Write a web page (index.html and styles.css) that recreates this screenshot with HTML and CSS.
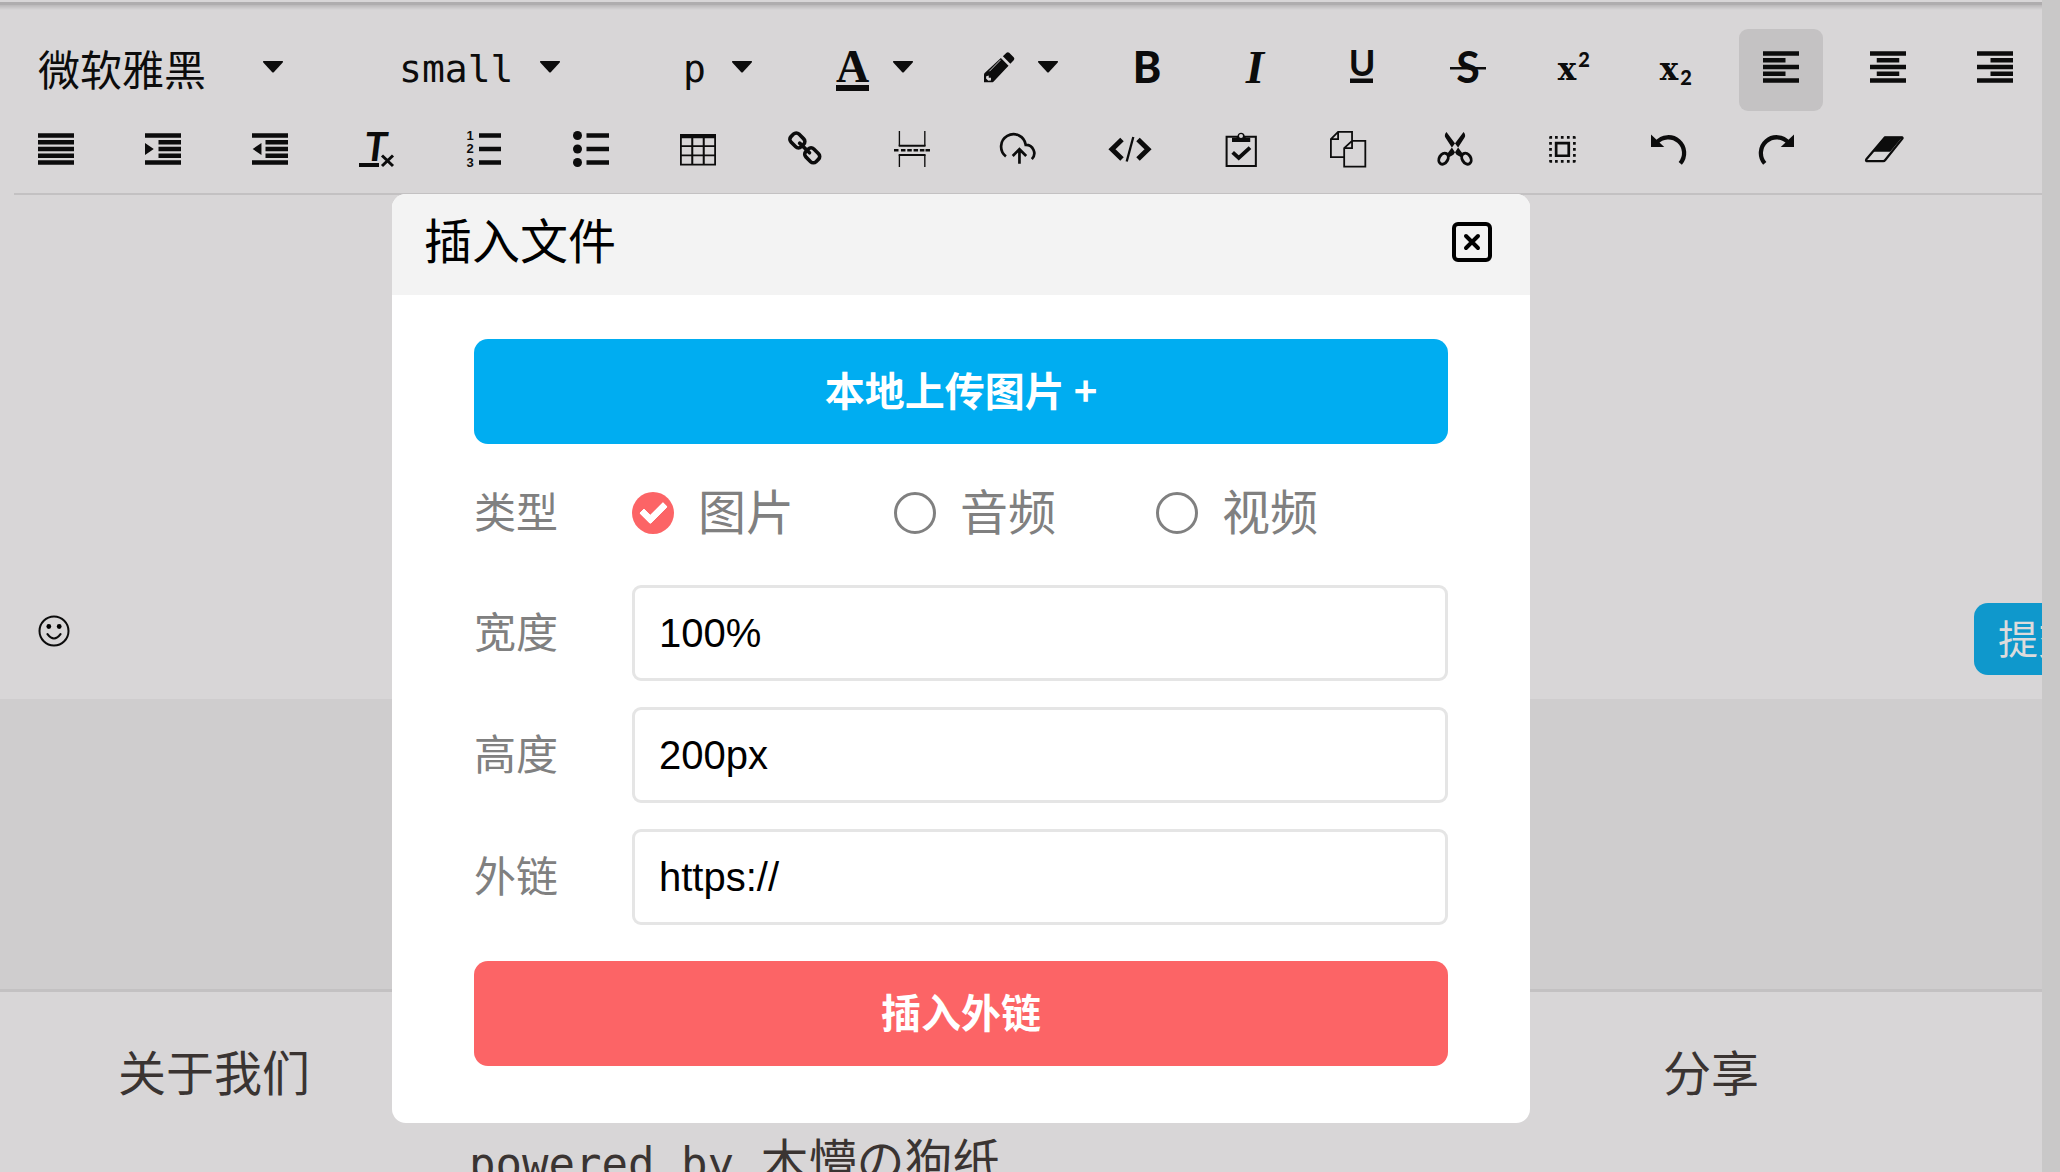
FILE: index.html
```html
<!DOCTYPE html>
<html lang="zh-CN">
<head>
<meta charset="utf-8">
<title>插入文件</title>
<link rel="stylesheet" href="styles.css">
</head>
<body>
<div class="page">
  <div class="topline"></div>
  <main class="editor">
    <div class="toolbar" role="toolbar" aria-label="编辑器工具栏">
      <label class="tool picker">
        <select class="picker-select picker-font" aria-label="字体"><option>微软雅黑</option></select>
        <svg class="caret" viewBox="0 0 20 12"><path d="M1 0h18q2 0 .5 1.8L11 11q-1 1-2 0L.5 1.8Q-1 0 1 0z"/></svg>
      </label>
      <label class="tool picker picker-size">
        <select class="picker-select mono" aria-label="字号"><option>small</option></select>
        <svg class="caret" viewBox="0 0 20 12"><path d="M1 0h18q2 0 .5 1.8L11 11q-1 1-2 0L.5 1.8Q-1 0 1 0z"/></svg>
      </label>
      <label class="tool picker picker-block">
        <select class="picker-select mono" aria-label="段落"><option>p</option></select>
        <svg class="caret" viewBox="0 0 20 12"><path d="M1 0h18q2 0 .5 1.8L11 11q-1 1-2 0L.5 1.8Q-1 0 1 0z"/></svg>
      </label>
      <button class="tool" aria-label="文字颜色">
        <svg class="icon icon-color" viewBox="0 0 33 36"><text class="serif" x="16.5" y="33" font-size="46">A</text><path d="M0 36h33v6H0z"/></svg>
        <svg class="caret" viewBox="0 0 20 12"><path d="M1 0h18q2 0 .5 1.8L11 11q-1 1-2 0L.5 1.8Q-1 0 1 0z"/></svg>
      </button>
      <button class="tool" aria-label="背景颜色">
        <svg class="icon icon-pencil" viewBox="0 0 13.33 16"><path fill-rule="evenodd" d="M10 1.7q.6-.6 1.2 0l2 2q.6.7 0 1.300L11.700 6.600 8.400 3.200zM7.500 4l3.400 3.400L4.200 14.500q-.3.3-.7.3H0v-3.400q0-.4.300-.7zM1 12.100l-.1 1 1 1 1.200-.1v-1.200H2.100v-1z"/><path class="cut" d="M2.400 9.900l5-5.100"/></svg>
        <svg class="caret" viewBox="0 0 20 12"><path d="M1 0h18q2 0 .5 1.800L11 11q-1 1-2 0L.5 1.800Q-1 0 1 0z"/></svg>
      </button>
      <button class="tool" aria-label="加粗"><svg class="icon" viewBox="0 0 36 36"><text class="lato heavy" x="18" y="34" font-size="43">B</text></svg></button>
      <button class="tool" aria-label="斜体"><svg class="icon" viewBox="0 0 36 36"><text class="serif italic" x="19" y="34" font-size="47">I</text></svg></button>
      <button class="tool" aria-label="下划线"><svg class="icon" viewBox="0 0 36 36"><text class="lato" x="19" y="27" font-size="36">U</text><path d="M7 29.500h23V34H7z"/></svg></button>
      <button class="tool" aria-label="删除线"><svg class="icon" viewBox="0 0 36 36"><text class="lato" x="18" y="34" font-size="43">S</text><path d="M0 18h36v2.500H0z"/></svg></button>
      <button class="tool" aria-label="上标"><svg class="icon icon-script" viewBox="0 0 32 36"><text class="slab" x="10" y="31" font-size="31">x</text><text class="lato heavy" x="27" y="18" font-size="20">2</text></svg></button>
      <button class="tool" aria-label="下标"><svg class="icon icon-script" viewBox="0 0 32 36"><text class="slab" x="9" y="31" font-size="31">x</text><text class="lato heavy" x="26" y="36" font-size="20">2</text></svg></button>
      <button class="tool active" aria-label="左对齐"><svg class="icon" viewBox="0 0 16 16"><path d="M0 1h16v2H0zM0 4h10v2H0zM0 7h16v2H0zM0 10h10v2H0zM0 13h16v2H0z"/></svg></button>
      <button class="tool" aria-label="居中"><svg class="icon" viewBox="0 0 16 16"><path d="M0 1h16v2H0zM3 4h10v2H3zM0 7h16v2H0zM3 10h10v2H3zM0 13h16v2H0z"/></svg></button>
      <button class="tool" aria-label="右对齐"><svg class="icon" viewBox="0 0 16 16"><path d="M0 1h16v2H0zM6 4h10v2H6zM0 7h16v2H0zM6 10h10v2H6zM0 13h16v2H0z"/></svg></button>
      <button class="tool" aria-label="两端对齐"><svg class="icon" viewBox="0 0 16 16"><path d="M0 1h16v2H0zM0 4h16v2H0zM0 7h16v2H0zM0 10h16v2H0zM0 13h16v2H0z"/></svg></button>
      <button class="tool" aria-label="增加缩进"><svg class="icon" viewBox="0 0 16 16"><path d="M0 1h16v2H0zM6 4h10v2H6zM6 7h10v2H6zM6 10h10v2H6zM0 13h16v2H0zM0 5.300v5.400L3.900 8z"/></svg></button>
      <button class="tool" aria-label="减少缩进"><svg class="icon" viewBox="0 0 16 16"><path d="M0 1h16v2H0zM6 4h10v2H6zM6 7h10v2H6zM6 10h10v2H6zM0 13h16v2H0zM4.200 5.300v5.400L.3 8z"/></svg></button>
      <button class="tool" aria-label="清除格式"><svg class="icon" viewBox="0 0 36 36"><text class="lato italic" x="17" y="30" font-size="41">T</text><path d="M0 32h20v4H0z"/><path class="line" stroke-width="3" d="M23 24.500l11 10.500M34 24.500L23 35"/></svg></button>
      <button class="tool" aria-label="有序列表"><svg class="icon" viewBox="0 0 36 36"><text class="digit" x="4" y="9" font-size="13">1</text><text class="digit" x="4" y="22" font-size="13">2</text><text class="digit" x="4" y="36" font-size="13">3</text><path d="M13 2.300h22v4.500H13zM13 15.800h22v4.500H13zM13 29.300h22v4.500H13z"/></svg></button>
      <button class="tool" aria-label="无序列表"><svg class="icon" viewBox="0 0 16 16"><circle cx="2" cy="2" r="2"/><circle cx="2" cy="8" r="2"/><circle cx="2" cy="14" r="2"/><path d="M6 1h10v2H6zM6 7h10v2H6zM6 13h10v2H6z"/></svg></button>
      <button class="tool" aria-label="表格"><svg class="icon" viewBox="0 0 16 16"><path fill-rule="evenodd" d="M0 1.300h16v14H0zM.8 3.200v3.100h4.200V3.200zM5.900 3.200v3.100h4.200V3.200zM11 3.200v3.100h4.200V3.200zM.8 7.100v3.300h4.200V7.100zM5.900 7.100v3.300h4.200V7.100zM11 7.100v3.300h4.200V7.100zM.8 11.200v3.300h4.200v-3.300zM5.900 11.200v3.300h4.200v-3.300zM11 11.200v3.300h4.200v-3.300z"/></svg></button>
      <button class="tool" aria-label="链接"><svg class="icon" viewBox="0 0 16 16"><g class="line" stroke-width="1.600"><rect x="1.400" y="1.700" width="6.400" height="5" rx="1.700" transform="rotate(45 4.600 4.200)"/><rect x="8" y="8.300" width="6.400" height="5" rx="1.700" transform="rotate(45 11.200 10.800)"/><path stroke-linecap="round" d="M5.600 5.400l4.400 4.300"/></g></svg></button>
      <button class="tool" aria-label="分页符"><svg class="icon" viewBox="0 0 16 16"><path class="line" stroke-width=".6" d="M2.400 0v6.700M13.700 0v6.700M2.400 10.600V16M13.700 10.600V16"/><path class="line" stroke-width=".9" d="M2.100 6.600H14M2.100 10.700H14"/><path class="line" stroke-width="1.100" stroke-dasharray="2 .8" d="M0 8.600h2M3.100 8.600h10.400M14 8.600h2"/></svg></button>
      <button class="tool" aria-label="上传"><svg class="icon" viewBox="0 0 16 16"><path class="line" stroke-width="1.200" d="M2.200 11.300A5.500 5.500 0 1 1 11 6.200 3.700 3.700 0 0 1 13.700 12.500M8.200 14.600V8.200M5.200 11.100l3-3 3 3"/></svg></button>
      <button class="tool" aria-label="源代码"><svg class="icon icon-code" viewBox="1 0 44 36"><path class="line" stroke-width="5" d="M15 8.500l-10 9.800 10 9.700M31 8.500l10 9.800-10 9.700"/><path class="line" stroke-width="2.300" d="M26.300 6l-6.600 24.500"/></svg></button>
      <button class="tool" aria-label="粘贴"><svg class="icon" viewBox="0 0 16 16"><path class="line" stroke-width=".9" d="M1.600 2.600h13v13h-13z"/><path d="M4 3h1.800q.6-.1.700-1a1.600 1.600 0 0 1 3.100 0q.1.900.7 1h1.800v1.900H4z"/><circle class="hole" cx="8" cy="2.200" r=".9"/><path class="line" stroke-width="1.700" d="M4.300 9.500l2.700 2.500 5-4.600"/></svg></button>
      <button class="tool" aria-label="复制"><svg class="icon" viewBox="0 0 16 16"><path class="line" stroke-width=".8" d="M6.300 11.600H.4V3.600L3.600.4h6.200v4M.4 3.600h3.200V.4M9.800 4.400h5.900v11.400H6.300V7.600zM6.300 7.600h3.500V4.400"/></svg></button>
      <button class="tool" aria-label="剪切"><svg class="icon" viewBox="0 0 16 16"><path d="M4.200.4Q3 1.700 3.800 3l4.900 7.600 2.200 1.200.8-1.400zM11.800.4Q13 1.700 12.200 3l-4.900 7.600-2.200 1.200-.8-1.400z"/><g class="line" stroke-width="1.300"><ellipse cx="2.900" cy="12.300" rx="1.900" ry="2.600" transform="rotate(30 2.900 12.300)"/><ellipse cx="13.100" cy="12.300" rx="1.900" ry="2.600" transform="rotate(-30 13.100 12.300)"/></g><circle class="hole" cx="8" cy="7.700" r=".4"/></svg></button>
      <button class="tool" aria-label="全选"><svg class="icon" viewBox="0 0 16 16"><path d="M2.300 3.400V2.800q0-.6.6-.6h.7v1.200zM4.900 2.200h1.200v1.200H4.900zM7.500 2.200h1.200v1.200H7.500zM10.200 2.200h1.200v1.200h-1.200zM12.800 2.200h.7q.6 0 .6.600v.6h-1.300zM2.300 4.900h1.200v1.200H2.300zM2.300 7.600h1.200v1.200H2.300zM2.300 10.200h1.200v1.200H2.300zM12.900 4.900h1.200v1.200h-1.200zM12.900 7.600h1.200v1.200h-1.200zM12.900 10.200h1.200v1.200h-1.200zM2.300 12.900h1.300v1.200h-.7q-.6 0-.6-.6zM4.900 12.900h1.200v1.200H4.900zM7.500 12.900h1.200v1.200H7.500zM10.200 12.900h1.200v1.200h-1.200zM12.800 12.900h1.300v.6q0 .6-.6.600h-.7z"/><path class="line" stroke-width="1.200" d="M5.400 5.400h5.600v5.600H5.400z"/></svg></button>
      <button class="tool" aria-label="撤销"><svg class="icon" viewBox="0 0 16 16"><path d="M0 1.500v5.600h5.900z"/><path class="line" stroke-width="1.900" d="M2.400 5.200A7 7 0 1 1 13 14.400"/></svg></button>
      <button class="tool" aria-label="重做"><svg class="icon" viewBox="0 0 16 16"><path d="M16 1.500v5.600h-5.900z"/><path class="line" stroke-width="1.900" d="M13.600 5.200A7 7 0 1 0 3 14.400"/></svg></button>
      <button class="tool" aria-label="清空"><svg class="icon" viewBox="0 0 16 16"><path class="line" stroke-width="1" stroke-linejoin="round" d="M8.900 2.800h7.500q.5.200.2.600L9 12.900q-.4.500-.9.500H.8q-.6-.2-.2-.8z"/><path d="M8.700 2.600h8L11.200 9.200H3.500z"/></svg></button>
    </div>
    <div class="canvas">
      <button class="emoji" aria-label="表情"><svg class="smile" viewBox="0 0 32 32"><circle class="line" stroke-width="2" cx="16" cy="16" r="14.500"/><circle cx="10.800" cy="11.500" r="2.400"/><circle cx="21.200" cy="11.500" r="2.400"/><path class="line" stroke-width="2.200" stroke-linecap="round" d="M9.500 19.200q6.500 8.600 13 0"/></svg></button>
      <button class="submit">提交</button>
    </div>
  </main>
  <footer class="footer">
    <nav class="links"><a href="#about">关于我们</a><a href="#share">分享</a></nav>
    <p class="powered"><span class="powered-latin">powered by </span>木懵の狗纸</p>
  </footer>
</div>

<section class="modal" role="dialog" aria-labelledby="modal-title">
  <header class="modal-head">
    <h2 class="modal-title" id="modal-title">插入文件</h2>
    <button class="close" aria-label="关闭"><svg class="close-icon" viewBox="0 0 40 40"><rect class="line" stroke-width="4" x="2" y="2" width="36" height="36" rx="4"/><path class="line" stroke-width="4" stroke-linecap="round" d="M14 14l12 12M26 14L14 26"/></svg></button>
  </header>
  <form class="modal-body">
    <button class="action upload" type="button">本地上传图片 +</button>
    <div class="row types" role="radiogroup" aria-labelledby="type-label">
      <span class="name" id="type-label">类型</span>
      <label class="choice"><input class="radio" type="radio" name="type" checked><span class="choice-text">图片</span></label>
      <label class="choice"><input class="radio" type="radio" name="type"><span class="choice-text">音频</span></label>
      <label class="choice"><input class="radio" type="radio" name="type"><span class="choice-text">视频</span></label>
    </div>
    <div class="row"><label class="name" for="width">宽度</label><input class="field" id="width" type="text" value="100%"></div>
    <div class="row"><label class="name" for="height">高度</label><input class="field" id="height" type="text" value="200px"></div>
    <div class="row"><label class="name" for="link">外链</label><input class="field" id="link" type="text" value="https://"></div>
    <button class="action insert" type="button">插入外链</button>
  </form>
</section>
</body>
</html>
```

FILE: styles.css
```css
*,
*::before {
  box-sizing: border-box;
}

body {
  margin: 0;
  height: 100vh;
  overflow: hidden;
  position: relative;
  background: #c9c8c8;
  color: #0c0c0c;
  font-family: "Noto Sans CJK SC", sans-serif;
}

button {
  border: 0;
  padding: 0;
  background: none;
  color: inherit;
  font-family: inherit;
  cursor: pointer;
}

.page {
  min-height: 100%;
  margin-right: 18px;
  overflow: hidden;
  background: #cfcdce;
}

.topline {
  height: 5px;
  border-top: 2px solid #d8d6d7;
  background: #afadae;
}

/* Editor */
.editor {
  padding: 24px 0 24px 14px;
  background: linear-gradient(#bab8b9, #d8d6d7 5px);
}

.toolbar {
  display: flex;
  flex-wrap: wrap;
  column-gap: 23px;
  border-bottom: 2px solid #c3c1c2;
}

.tool {
  display: flex;
  align-items: center;
  gap: 24px;
  height: 82px;
  padding: 20px 24px 26px;
  border-radius: 9px;
}

.tool.active {
  background: #c4c2c3;
}

.picker {
  gap: 26px;
}

.picker-size {
  padding-left: 69px;
}

.picker-block {
  padding-left: 76px;
  padding-right: 37px;
}

.picker-select {
  appearance: none;
  height: 60px;
  padding: 0 0 2px;
  border: 0;
  background: none;
  color: inherit;
  font-family: inherit;
  font-size: 42px;
}

.picker-font {
  width: 199px;
}

.picker-select.mono {
  padding: 4px 0 0;
  font-family: "DejaVu Sans Mono", monospace;
  font-size: 38px;
}

.icon {
  display: block;
  width: 36px;
  height: 36px;
  overflow: visible;
  fill: currentColor;
}

.icon-color {
  width: 33px;
}

.icon-pencil {
  width: 30px;
}

.icon-script {
  width: 32px;
}

.icon-code {
  width: 44px;
}

.icon text {
  text-anchor: middle;
  font-weight: 700;
}

.icon .lato {
  font-family: Lato, sans-serif;
}

.icon .heavy {
  font-weight: 900;
}

.icon .serif {
  font-family: "Liberation Serif", serif;
}

.icon .slab {
  font-family: "DejaVu Serif", serif;
}

.icon .digit {
  font-family: "Liberation Sans", sans-serif;
}

.icon .italic {
  font-style: italic;
}

.line {
  fill: none;
  stroke: currentColor;
}

.cut {
  fill: none;
  stroke: #d8d6d7;
  stroke-width: 0.4;
}

.hole {
  fill: #d8d6d7;
}

.caret {
  display: block;
  flex: none;
  width: 20px;
  height: 12px;
  fill: currentColor;
}

.canvas {
  display: flex;
  align-items: flex-end;
  justify-content: space-between;
  height: 480px;
  padding-left: 24px;
}

.emoji {
  margin-bottom: 28px;
}

.smile {
  display: block;
  width: 32px;
  height: 32px;
}

.submit {
  height: 72px;
  margin-right: -60px;
  padding: 0 24px 4px;
  border-radius: 14px;
  background: #0f98cc;
  color: #dddbdc;
  font-size: 40px;
  line-height: 68px;
}

/* Footer */
.footer {
  margin-top: 290px;
  border-top: 3px solid #c3c1c2;
  background: #d8d6d7;
  color: #3a3432;
  font-size: 48px;
  line-height: 72px;
}

.links {
  display: flex;
  justify-content: space-between;
  padding: 42px 283px 0 118px;
}

.links a {
  color: inherit;
  text-decoration: none;
}

.powered {
  margin: 16px 0 0 469px;
}

.powered-latin {
  font-family: "DejaVu Sans Mono", monospace;
  font-size: 44px;
  white-space: pre;
}

/* Dialog */
.modal {
  position: absolute;
  top: 194px;
  left: 392px;
  right: 530px;
  overflow: hidden;
  border-radius: 14px;
  background: #fff;
  color: #000;
}

.modal-head {
  display: flex;
  align-items: center;
  justify-content: space-between;
  padding: 20px 38px 25px 32px;
  background: #f3f3f3;
}

.modal-title {
  margin: 0;
  padding-bottom: 8px;
  font-size: 48px;
  font-weight: 400;
  line-height: 48px;
}

.close-icon {
  display: block;
  width: 40px;
  height: 40px;
}

.modal-body {
  display: flex;
  flex-direction: column;
  gap: 26px;
  padding: 44px 82px 57px;
}

.action {
  height: 105px;
  padding-bottom: 6px;
  border-radius: 14px;
  color: #fff;
  font-size: 40px;
  font-weight: 700;
}

.upload {
  background: #00adf1;
}

.insert {
  margin-top: 10px;
  background: #fc6466;
}

.row {
  display: flex;
  align-items: center;
  color: #808080;
}

.types {
  height: 89px;
  padding-bottom: 4px;
}

.name {
  flex: none;
  width: 158px;
  padding-bottom: 6px;
  font-size: 42px;
  line-height: 60px;
}

.choice {
  display: flex;
  align-items: center;
  gap: 24px;
  margin-right: 100px;
  font-size: 48px;
  line-height: 72px;
}

.choice-text {
  padding-bottom: 8px;
}

.radio {
  appearance: none;
  width: 42px;
  height: 42px;
  margin: 0;
  border: 3px solid #808080;
  border-radius: 50%;
}

.radio:checked {
  display: flex;
  align-items: center;
  justify-content: center;
  border: 0;
  background: #fc6466;
}

.radio:checked::before {
  content: "";
  width: 25px;
  height: 16px;
  margin-bottom: 6px;
  border: solid #fff;
  border-width: 0 0 7px 7px;
  border-radius: 2px;
  transform: rotate(-45deg);
}

.field {
  flex: 1;
  min-width: 0;
  height: 96px;
  padding: 0 24px;
  border: 3px solid #e5e5e5;
  border-radius: 9px;
  background: #fff;
  color: #000;
  font-family: "Liberation Sans", Arial, sans-serif;
  font-size: 40px;
}
```
